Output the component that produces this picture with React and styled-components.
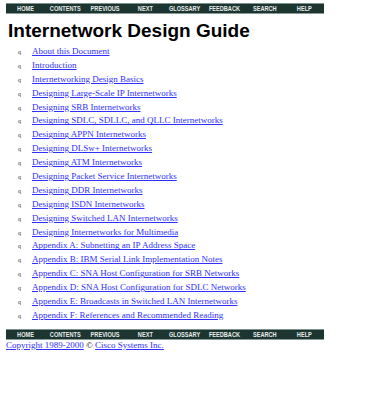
import React from "react";
import styled, { createGlobalStyle } from "styled-components";

const GlobalStyle = createGlobalStyle`
    body {
        margin: 0;
        background: #ffffff;
        font-family: "Liberation Serif", "Times New Roman", serif;
    }
`;

const Page = styled.div`
    width: 386px;
    padding: 3px 0 0 6px;
    box-sizing: border-box;
`;

const NavBar = styled.div`
    width: 318px;
    height: 11px;
    display: grid;
    grid-template-columns: repeat(8, 1fr);
    align-items: center;
    background-color: #1c3531;
    border-top: 1px solid #7d918d;
    border-bottom: 1px solid #8a9c98;
    box-sizing: border-box;
    margin-top: ${({ $top }) => $top || 0}px;
`;

const NavItem = styled.a`
    display: flex;
    justify-content: center;
    color: #e9ecea;
    text-decoration: none;
    font-family: "Liberation Sans", Arial, sans-serif;
    font-weight: bold;
    font-size: 7px;
    line-height: 9px;
    white-space: nowrap;
    span {
        display: inline-block;
        transform: scaleX(0.8);
    }
`;

const Title = styled.h1`
    margin: 6px 0 0 2px;
    font-family: "Liberation Sans", Arial, sans-serif;
    font-weight: bold;
    font-size: 19px;
    line-height: 22px;
    color: #000;
`;

const Contents = styled.ul`
    list-style: none;
    margin: 3px 0 0;
    padding: 0 0 0 12px;
`;

const Item = styled.li`
    display: block;
    height: 13.9px;
    font-size: 9px;
    line-height: 13.9px;
    white-space: nowrap;
`;

const Bullet = styled.span`
    display: inline-block;
    width: 14px;
    font-size: 6px;
    line-height: 6px;
    color: #333;
`;

const Link = styled.a`
    color: #2f2fff;
    text-decoration: underline;
`;

const Footer = styled.div`
    font-size: 9px;
    line-height: 11px;
    color: #000;
`;

const navLinks = ["HOME", "CONTENTS", "PREVIOUS", "NEXT", "GLOSSARY", "FEEDBACK", "SEARCH", "HELP"];

const chapters = [
    "About this Document",
    "Introduction",
    "Internetworking Design Basics",
    "Designing Large-Scale IP Internetworks",
    "Designing SRB Internetworks",
    "Designing SDLC, SDLLC, and QLLC Internetworks",
    "Designing APPN Internetworks",
    "Designing DLSw+ Internetworks",
    "Designing ATM Internetworks",
    "Designing Packet Service Internetworks",
    "Designing DDR Internetworks",
    "Designing ISDN Internetworks",
    "Designing Switched LAN Internetworks",
    "Designing Internetworks for Multimedia",
    "Appendix A: Subnetting an IP Address Space",
    "Appendix B: IBM Serial Link Implementation Notes",
    "Appendix C: SNA Host Configuration for SRB Networks",
    "Appendix D: SNA Host Configuration for SDLC Networks",
    "Appendix E: Broadcasts in Switched LAN Internetworks",
    "Appendix F: References and Recommended Reading",
];

const Nav = ({ top }) => (
    <NavBar $top={top}>
        {navLinks.map((label) => (
            <NavItem href="#" key={label}>
                <span>{label}</span>
            </NavItem>
        ))}
    </NavBar>
);

export default function App() {
    return (
        <Page>
            <GlobalStyle />
            <Nav />
            <Title>Internetwork Design Guide</Title>
            <Contents>
                {chapters.map((c) => (
                    <Item key={c}>
                        <Bullet>q</Bullet>
                        <Link href="#">{c}</Link>
                    </Item>
                ))}
            </Contents>
            <Nav top={6} />
            <Footer>
                <Link href="#">Copyright 1989-2000</Link> © <Link href="#">Cisco Systems Inc.</Link>
            </Footer>
        </Page>
    );
}
